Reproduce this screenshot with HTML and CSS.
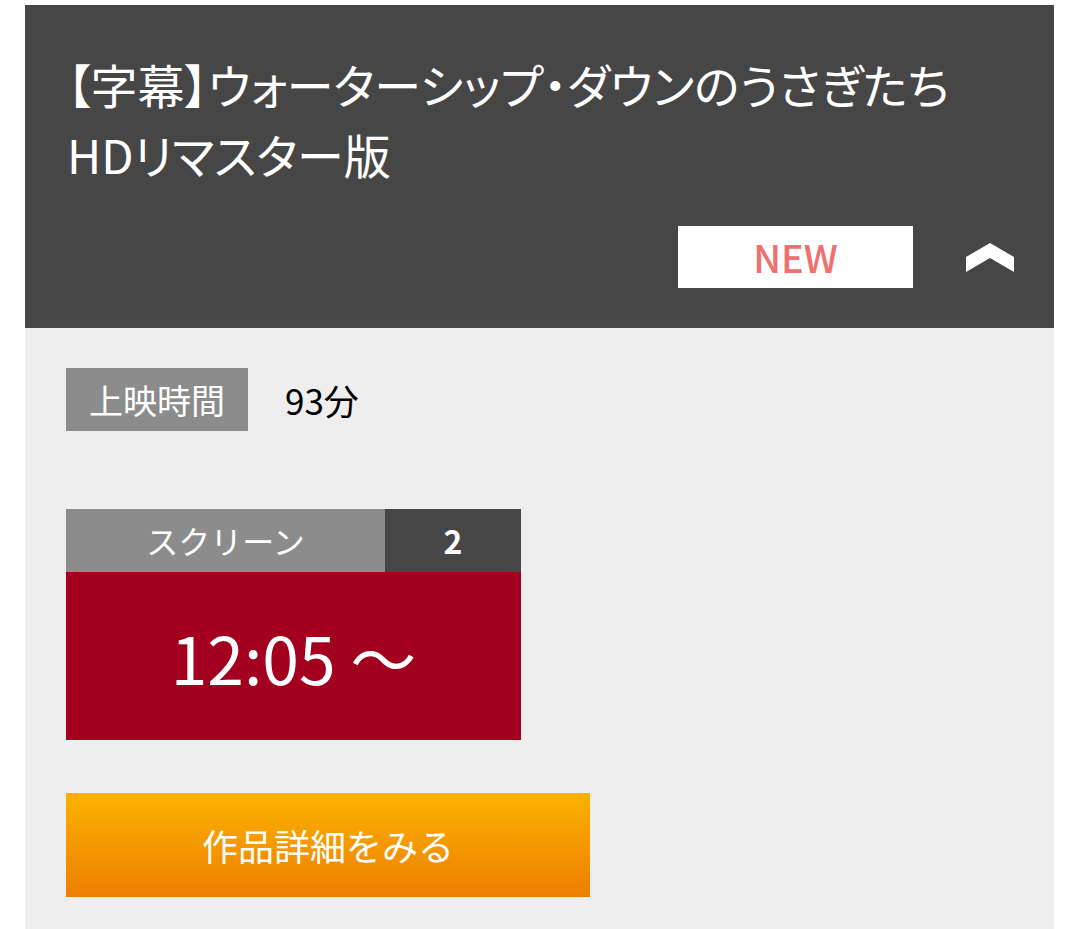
FILE: index.html
```html
<!DOCTYPE html>
<html lang="ja">

<head>
    <meta charset="UTF-8">
    <title>上映スケジュール</title>
    <meta name="viewport" content="width=device-width, initial-scale=1.0">
    <link rel="stylesheet" href="styles.css">
</head>

<body>
    <div class="movie">
        <div class="movie-head">
            <h2 class="movie-title">【字幕】ウォーターシップ・ダウンのうさぎたち<br>HDリマスター版</h2>
            <div class="head-foot">
                <span class="badge-new">NEW</span>
                <button class="toggle-btn" aria-label="閉じる">
                    <svg width="48" height="29" viewBox="0 0 48 29">
                        <polygon points="0,14 24,0 48,14 48,29 24,15 0,29" fill="#fff" />
                    </svg>
                </button>
            </div>
        </div>
        <div class="movie-body">
            <div class="info-row">
                <span class="info-label">上映時間</span>
                <span class="info-value">93分</span>
            </div>

            <div class="showtime">
                <div class="screen-row">
                    <span class="screen-label">スクリーン</span>
                    <span class="screen-no">2</span>
                </div>
                <div class="time">12:05 ～</div>
            </div>

            <a class="detail-btn" href="#">作品詳細をみる</a>
        </div>
    </div>
</body>

</html>
```

FILE: styles.css
```css
body {
    font-family: "Noto Sans CJK JP", "Noto Sans", sans-serif;
    margin: 5px 26px 0 25px;
    padding: 0;
    background: #fff;
}

.movie {
    background: #eee;
    min-height: 924px;
}

.movie-head {
    background: #464646;
    color: #fff;
    padding: 44px 40px 40px 42px;
}

.movie-title {
    margin: 0;
    font-size: 47px;
    font-weight: 400;
    line-height: 70px;
    font-feature-settings: "palt";
}

.head-foot {
    display: flex;
    justify-content: flex-end;
    align-items: center;
    gap: 53px;
    margin-top: 37px;
}

.badge-new {
    display: block;
    width: 235px;
    height: 62px;
    line-height: 62px;
    text-align: center;
    background: #fff;
    color: #f07070;
    font-size: 38px;
    font-weight: 500;
}

.toggle-btn {
    padding: 0;
    border: none;
    background: none;
    cursor: pointer;
    display: flex;
}

.movie-body {
    padding: 40px 41px 30px;
}

.info-row {
    display: flex;
    align-items: center;
    gap: 37px;
}

.info-label {
    display: block;
    height: 63px;
    line-height: 63px;
    padding: 0 23px;
    background: #8c8c8c;
    color: #fff;
    font-size: 34px;
}

.info-value {
    color: #000;
    font-size: 35px;
}

.showtime {
    width: 455px;
    margin-top: 78px;
}

.screen-row {
    display: flex;
    height: 63px;
    line-height: 63px;
    font-size: 32px;
    color: #fff;
    text-align: center;
}

.screen-label {
    flex: 1;
    background: #8c8c8c;
}

.screen-no {
    width: 136px;
    background: #464646;
    font-weight: 700;
}

.time {
    height: 168px;
    line-height: 168px;
    background: #a3001f;
    color: #fff;
    font-size: 66px;
    text-align: center;
}

.detail-btn {
    display: block;
    width: 524px;
    height: 104px;
    line-height: 104px;
    margin-top: 53px;
    background: linear-gradient(#fbb200, #ee7e00);
    color: #fff;
    font-size: 36px;
    text-align: center;
    text-decoration: none;
}
```
